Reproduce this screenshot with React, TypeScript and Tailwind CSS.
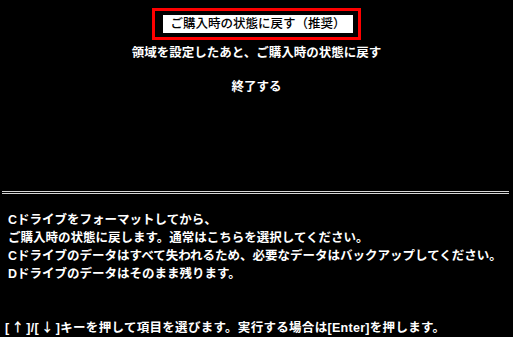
export default function App() {
  return (
    <div
      className="w-[513px] h-[337px] bg-black text-white flex flex-col text-[12.5px] font-bold leading-[18px] overflow-hidden"
      style={{ fontFamily: '"Liberation Sans", "Noto Sans CJK JP", sans-serif' }}
    >
      {/* menu */}
      <div className="flex flex-col items-center pt-[8px]">
        <div className="border-[3px] border-[#ff0000] pl-[8px] pr-[5px] py-[4px]">
          <div className="bg-white text-black font-medium h-[18px] px-[7px] leading-[18px]">
            ご購入時の状態に戻す（推奨）
          </div>
        </div>
        <div className="mt-[4px]">領域を設定したあと、ご購入時の状態に戻す</div>
        <div className="mt-[16px]">終了する</div>
      </div>

      {/* divider */}
      <div className="mt-[95px] ml-[2px] mr-[4px] h-[3px] border-y border-[#d4d4d4]" />

      {/* description */}
      <div className="mt-[17px] pl-[8px]">
        <p>Cドライブをフォーマットしてから、</p>
        <p>ご購入時の状態に戻します。通常はこちらを選択してください。</p>
        <p>Cドライブのデータはすべて失われるため、必要なデータはバックアップしてください。</p>
        <p>Dドライブのデータはそのまま残ります。</p>
      </div>

      {/* key help */}
      <div className="mt-[35px] pl-[5px] whitespace-nowrap tracking-[0.3px]">
        [<span className="px-[2px]" style={{ fontFamily: '"Noto Sans CJK JP", sans-serif' }}>↑</span>]/[
        <span className="px-[2px]" style={{ fontFamily: '"Noto Sans CJK JP", sans-serif' }}>↓</span>]キーを押して項目を選びます。実行する場合は[Enter]を押します。
      </div>
    </div>
  )
}
